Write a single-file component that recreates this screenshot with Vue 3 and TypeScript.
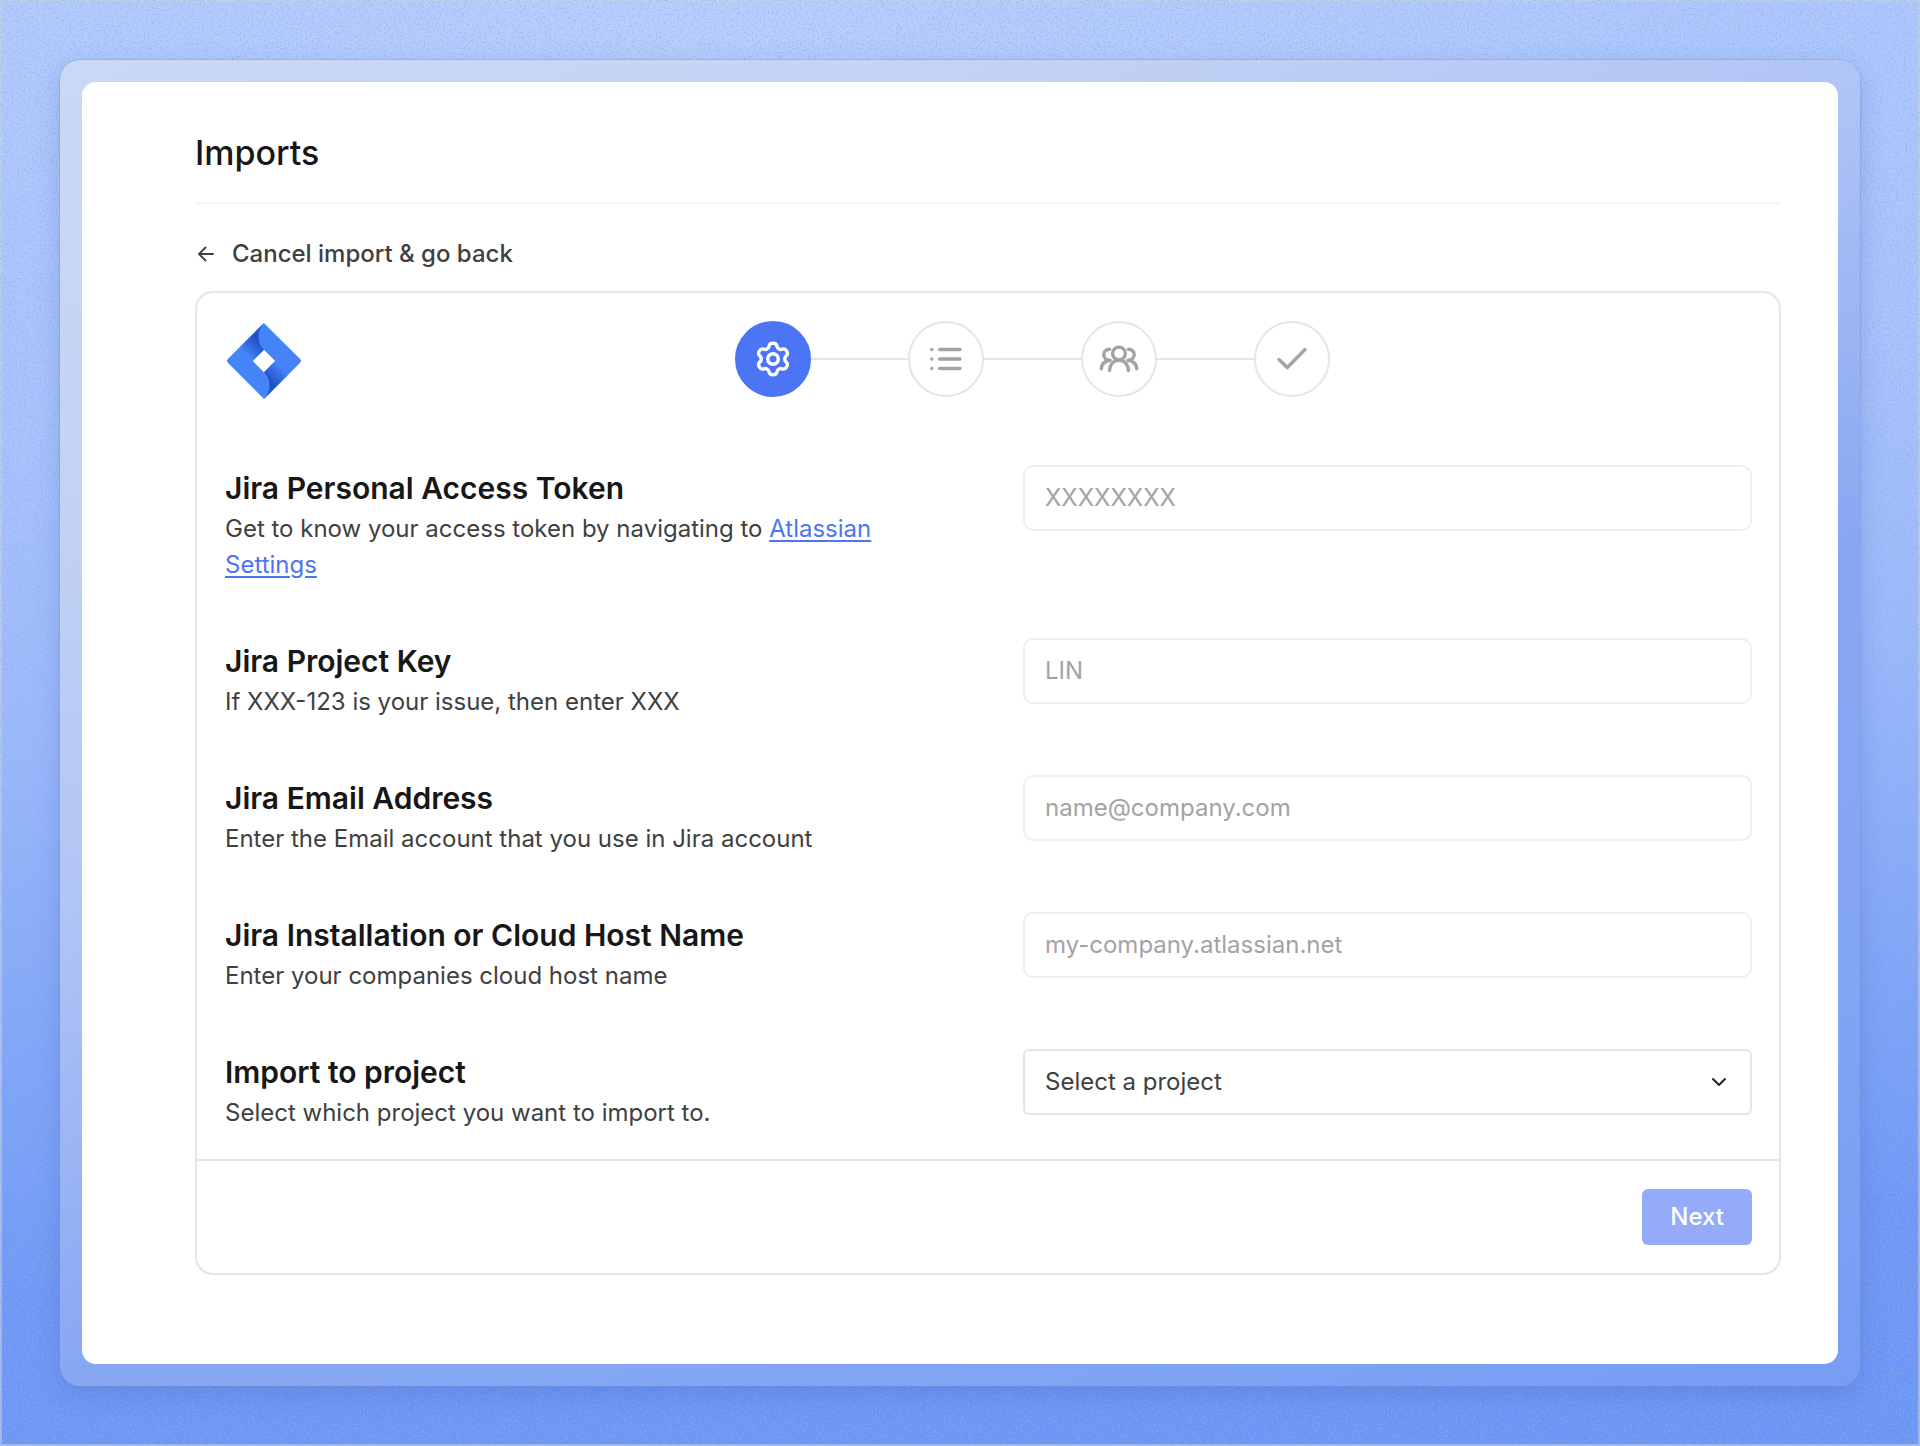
<script setup lang="ts">
import { ref } from 'vue'

interface Field {
  id: string
  title: string
  description: string
  placeholder: string
  link?: string
}

const fields: Field[] = [
  {
    id: 'token',
    title: 'Jira Personal Access Token',
    description: 'Get to know your access token by navigating to ',
    link: 'Atlassian Settings',
    placeholder: 'XXXXXXXX',
  },
  {
    id: 'key',
    title: 'Jira Project Key',
    description: 'If XXX-123 is your issue, then enter XXX',
    placeholder: 'LIN',
  },
  {
    id: 'email',
    title: 'Jira Email Address',
    description: 'Enter the Email account that you use in Jira account',
    placeholder: 'name@company.com',
  },
  {
    id: 'host',
    title: 'Jira Installation or Cloud Host Name',
    description: 'Enter your companies cloud host name',
    placeholder: 'my-company.atlassian.net',
  },
]

const values = ref<Record<string, string>>({ token: '', key: '', email: '', host: '' })
const project = ref('')

// One gear tooth pointing up; the outline repeats it every 60 degrees.
const tooth: number[][] = [
  [-4.6, -10.8], [-4.1, -11.6], [-3.9, -13],
  [-3.5, -15.2], [-2.2, -15.8], [0, -15.8],
  [2.2, -15.8], [3.5, -15.2], [3.9, -13],
  [4.1, -11.6], [4.6, -10.8], [5.9, -10.2],
]

function gearPath(): string {
  let d = 'M-5.9 -10.2'
  for (let i = 0; i < 6; i++) {
    const a = (i * Math.PI) / 3
    const points = tooth.map(([x, y]) => {
      const px = x * Math.cos(a) - y * Math.sin(a)
      const py = x * Math.sin(a) + y * Math.cos(a)
      return `${px.toFixed(2)} ${py.toFixed(2)}`
    })
    d += ' C' + points.join(' ')
  }
  return d + 'Z'
}

const gear = gearPath()
</script>

<template>
  <div class="backdrop">
    <svg class="grain" aria-hidden="true">
      <filter id="grain" x="0" y="0" width="100%" height="100%">
        <feTurbulence type="fractalNoise" baseFrequency="0.5" numOctaves="2" seed="4" />
        <feColorMatrix values="0 0 0 0 0.3  0 0 0 0 0.42  0 0 0 0 0.7  2.6 0 0 0 -1.2" />
      </filter>
      <rect width="100%" height="100%" filter="url(#grain)" />
    </svg>
    <div class="frame">
      <main class="window">
        <header class="page-head">
          <h1>Imports</h1>
        </header>
        <a class="back" href="#">
          <svg width="20" height="20" viewBox="0 0 20 20" aria-hidden="true">
            <path d="M18 10H4M10.500 3.500L4 10l6.500 6.500" fill="none" stroke="currentColor" stroke-width="1.800" stroke-linecap="round" stroke-linejoin="round" />
          </svg>
          <span>Cancel import &amp; go back</span>
        </a>

        <form class="card" @submit.prevent>
          <div class="body">
            <div class="top">
              <div class="logo">
                <svg width="76" height="76" viewBox="-1 -2 73.300 75.800" role="img" aria-label="Jira">
                  <defs>
                    <linearGradient id="j1" x1="34.640" y1="15.350" x2="19" y2="30.990" gradientUnits="userSpaceOnUse">
                      <stop offset="0.18" stop-color="#1f50c4" />
                      <stop offset="1" stop-color="#4583f8" />
                    </linearGradient>
                    <linearGradient id="j2" x1="38.780" y1="60.280" x2="54.390" y2="44.670" gradientUnits="userSpaceOnUse">
                      <stop offset="0.18" stop-color="#1f50c4" />
                      <stop offset="1" stop-color="#4583f8" />
                    </linearGradient>
                  </defs>
                  <path fill="#4583f8" d="M72.400 35.760L39.800 3.160 36.640 0 12.100 24.540.88 35.760a3 3 0 0 0 0 4.240L23.300 62.420l13.340 13.340 24.540-24.540.38-.38L72.400 40a3 3 0 0 0 0-4.240zM36.640 49.080l-11.200-11.200 11.200-11.200 11.200 11.200z" />
                  <path fill="url(#j1)" d="M36.640 26.680a18.860 18.860 0 0 1-.08-26.590L12.050 24.590 25.390 37.930z" />
                  <path fill="url(#j2)" d="M47.870 37.850L36.640 49.080a18.860 18.860 0 0 1 0 26.680l24.570-24.570z" />
                </svg>
              </div>
              <ol class="steps">
                <li class="step active">
                  <svg width="40" height="40" viewBox="-20 -20 40 40" aria-hidden="true">
                    <path :d="gear" />
                    <circle r="5.300" />
                  </svg>
                </li>
                <li class="line" aria-hidden="true"></li>
                <li class="step">
                  <svg width="40" height="40" viewBox="-20 -20 40 40" aria-hidden="true">
                    <path d="M-6.300 -9.500H14M-6.300 0H14M-6.300 9.500H14" />
                    <path d="M-14.200 -9.500h.01M-14.200 0h.01M-14.200 9.500h.01" />
                  </svg>
                </li>
                <li class="line" aria-hidden="true"></li>
                <li class="step">
                  <svg width="40" height="40" viewBox="-20 -20 40 40" aria-hidden="true">
                    <circle cy="-5.500" r="6.400" />
                    <path d="M-9.400 11.500C-9 5 -5 1.300 0 1.300S9 5 9.400 11.500" />
                    <path d="M-9.300 -9.700C-17 -9.700 -17.500 1 -8.800 1.200C-14 2 -17.500 5 -17.700 9.700" />
                    <path d="M9.300 -9.700C17 -9.700 17.500 1 8.800 1.200C14 2 17.500 5 17.700 9.700" />
                  </svg>
                </li>
                <li class="line" aria-hidden="true"></li>
                <li class="step">
                  <svg width="40" height="40" viewBox="-20 -20 40 40" aria-hidden="true">
                    <path d="M-13 0.500L-4.700 8.500L13 -9.500" />
                  </svg>
                </li>
              </ol>
            </div>

            <div class="fields">
              <div v-for="f in fields" :key="f.id" class="field">
                <div class="copy">
                  <label :for="f.id">{{ f.title }}</label>
                  <p>{{ f.description }}<a v-if="f.link" href="#">{{ f.link }}</a></p>
                </div>
                <input :id="f.id" v-model="values[f.id]" class="control" type="text" :placeholder="f.placeholder" />
              </div>
              <div class="field">
                <div class="copy">
                  <label for="project">Import to project</label>
                  <p>Select which project you want to import to.</p>
                </div>
                <div class="select">
                  <select id="project" v-model="project" class="control">
                    <option value="">Select a project</option>
                  </select>
                  <svg width="16" height="16" viewBox="0 0 16 16" aria-hidden="true">
                    <path d="M2 5l6 6 6-6" fill="none" stroke="#222" stroke-width="2" stroke-linecap="round" stroke-linejoin="round" />
                  </svg>
                </div>
              </div>
            </div>
          </div>
          <footer class="foot">
            <button type="submit">Next</button>
          </footer>
        </form>
      </main>
    </div>
  </div>
</template>

<style>
body {
  margin: 0;
}
</style>

<style scoped>
.backdrop {
  position: relative;
  box-sizing: border-box;
  min-height: 100vh;
  display: flex;
  padding: 60px;
  background:
    radial-gradient(ellipse 50% 30% at 38% 0, rgba(190, 212, 254, 0.6), rgba(190, 212, 254, 0)),
    linear-gradient(177deg, #b0caff 0%, #a9c4ff 28%, #9bb9fd 48%, #80a6fb 68%, #6d98f9 84%, #6a95f8 100%);
  box-shadow: inset 0 0 0 2px rgba(200, 208, 222, 0.6);
  font-family: Inter, "Liberation Sans", sans-serif;
  color: #171717;
}
.grain {
  position: absolute;
  inset: 0;
  width: 100%;
  height: 100%;
  opacity: 0.7;
}
.frame {
  position: relative;
  flex: 1;
  display: flex;
  padding: 22px;
  border-radius: 20px;
  background: linear-gradient(155deg, #cad8f4 0%, #c4d3f4 20%, #b1c5f6 39%, #88a7f2 61%, #82a5f4 80%, #769cf4 100%);
  box-shadow: 0 0 0 1px rgba(120, 140, 200, 0.3), 0 8px 24px rgba(60, 90, 180, 0.28);
}
.window {
  flex: 1;
  padding: 40px 57px 88px 113px;
  border-radius: 14px;
  background: #fff;
}
.page-head {
  padding-bottom: 26px;
  border-bottom: 2px solid #f5f5f5;
}
h1 {
  margin: 0;
  padding-top: 8px;
  font-size: 34px;
  line-height: 46px;
  font-weight: 500;
}
.back {
  display: flex;
  align-items: center;
  gap: 17px;
  margin-top: 32px;
  margin-bottom: 19px;
  font-size: 24px;
  line-height: 36px;
  font-weight: 500;
  color: #404040;
  text-decoration: none;
}
.card {
  border: 2px solid #e5e5e5;
  border-radius: 18px;
}
.body {
  padding: 28px 27px 28px 28px;
}
.top {
  display: flex;
  align-items: center;
}
.logo {
  width: 88px;
}
.logo svg {
  display: block;
  overflow: visible;
}
.steps {
  flex: 1;
  display: flex;
  align-items: center;
  justify-content: center;
  margin: 0;
  padding: 0;
  list-style: none;
}
.step {
  box-sizing: border-box;
  width: 76px;
  height: 76px;
  display: grid;
  place-items: center;
  border: 2px solid #e5e5e5;
  border-radius: 50%;
  color: #a3a3a3;
}
.step svg {
  fill: none;
  stroke: currentColor;
  stroke-width: 3.400;
  stroke-linecap: round;
  stroke-linejoin: round;
}
.step.active {
  border-color: #4c75f5;
  background: #4c75f5;
  color: #fff;
}
.line {
  width: 97px;
  height: 2px;
  background: #e5e5e5;
}
.fields {
  display: grid;
  gap: 55px;
  margin-top: 68px;
}
.field {
  display: grid;
  grid-template-columns: 1fr 1fr;
  column-gap: 69px;
  align-items: start;
}
label {
  display: block;
  font-size: 30px;
  line-height: 46px;
  font-weight: 600;
}
p {
  margin: 0;
  font-size: 24px;
  line-height: 36px;
  color: #404040;
}
p a {
  color: #4c75f5;
  text-underline-offset: 3px;
}
.control {
  box-sizing: border-box;
  width: 100%;
  height: 66px;
  padding: 0 20px 2px;
  border: 2px solid #efefef;
  border-radius: 10px;
  background: #fff;
  font: inherit;
  font-size: 24px;
  color: #404040;
}
.control::placeholder {
  color: #a3a3a3;
  opacity: 1;
}
.select {
  display: grid;
  align-items: center;
}
.select > * {
  grid-area: 1 / 1;
}
.select .control {
  appearance: none;
  border-color: #e5e5e5;
  border-radius: 6px;
}
.select svg {
  justify-self: end;
  margin-right: 25px;
  pointer-events: none;
}
.foot {
  display: flex;
  justify-content: flex-end;
  padding: 28px 27px;
  border-top: 2px solid #e5e5e5;
}
button {
  height: 56px;
  padding: 0 28px 2px;
  border: 0;
  border-radius: 6px;
  background: #93abf9;
  font: inherit;
  font-size: 24px;
  font-weight: 500;
  color: #fff;
}
</style>
